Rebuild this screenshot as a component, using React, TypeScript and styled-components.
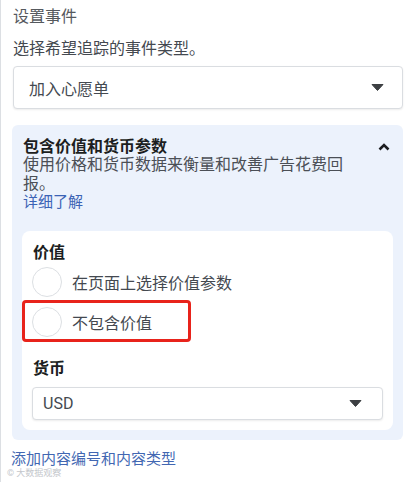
import React from "react";
import styled, { createGlobalStyle } from "styled-components";

const GlobalStyle = createGlobalStyle`
  html, body {
    margin: 0;
    padding: 0;
    background: #ffffff;
  }
  body {
    font-family: Roboto, "Noto Sans CJK SC", sans-serif;
    color: #444950;
  }
`;

const CaretDown: React.FC = () => (
  <svg width="13" height="7" viewBox="0 0 13 7">
    <path d="M1 0.5 H12 L6.5 6.5 Z" fill="#3d4043" stroke="#3d4043" strokeLinejoin="round" />
  </svg>
);

const ChevronUp: React.FC = () => (
  <svg width="12" height="8" viewBox="0 0 12 8">
    <polyline points="1.5,6.5 6,2 10.5,6.5" fill="none" stroke="#1c1e21" strokeWidth="2.6" />
  </svg>
);

interface SelectProps {
  value: string;
  size?: "lg" | "sm";
}

const Select: React.FC<SelectProps> = ({ value, size = "lg" }) => (
  <SelectBox $size={size}>
    <span>{value}</span>
    <CaretDown />
  </SelectBox>
);

const options = ["在页面上选择价值参数", "不包含价值"];

const App: React.FC = () => {
  return (
    <>
      <GlobalStyle />
      <Page>
        <SectionTitle>设置事件</SectionTitle>
        <Hint>选择希望追踪的事件类型。</Hint>
        <Select value="加入心愿单" />

        <Panel>
          <PanelHead>
            <PanelTitle>包含价值和货币参数</PanelTitle>
            <ChevronUp />
          </PanelHead>
          <Description>使用价格和货币数据来衡量和改善广告花费回报。</Description>
          <Link>详细了解</Link>

          <Card>
            <FieldLabel>价值</FieldLabel>
            {options.map((label, index) => (
              <RadioRow key={label}>
                <Radio />
                <RadioText>{label}</RadioText>
                {index === 1 && <Highlight />}
              </RadioRow>
            ))}
            <FieldLabel $gap>货币</FieldLabel>
            <Select value="USD" size="sm" />
          </Card>
        </Panel>

        <FooterLink>添加内容编号和内容类型</FooterLink>
        <Watermark>© 大数据观察</Watermark>
      </Page>
    </>
  );
};

export default App;

const Page = styled.div`
  box-sizing: border-box;
  height: 482px;
  padding: 8px 7px 0 11px;
  border-left: 1px solid #dcdfe3;
  display: flex;
  flex-direction: column;
  overflow: hidden;
`;

const SectionTitle = styled.div`
  font-size: 16px;
  line-height: 18px;
  color: #55595e;
  padding-left: 1px;
`;

const Hint = styled.div`
  margin-top: 14px;
  font-size: 16px;
  line-height: 18px;
  color: #444950;
  padding-left: 1px;
  margin-bottom: 8px;
`;

const SelectBox = styled.div<{ $size: "lg" | "sm" }>`
  box-sizing: border-box;
  display: flex;
  align-items: center;
  justify-content: space-between;
  height: ${(p) => (p.$size === "lg" ? "43px" : "33px")};
  margin-left: ${(p) => (p.$size === "lg" ? "1px" : "0")};
  padding: ${(p) => (p.$size === "lg" ? "0 18px 0 15px" : "0 20px 0 10px")};
  background: #ffffff;
  border: 1px solid #dadde1;
  border-radius: 4px;
  box-shadow: 0 1px 2px rgba(0, 0, 0, 0.08);
  font-size: 16px;
  color: #444950;
`;

const Panel = styled.div`
  margin-top: 16px;
  box-sizing: border-box;
  background: #ecf2fc;
  border-radius: 6px;
  padding: 14px 10px 10px 10px;
`;

const PanelHead = styled.div`
  display: flex;
  align-items: center;
  justify-content: space-between;
  padding: 0 3px 0 1px;
`;

const PanelTitle = styled.div`
  font-size: 16px;
  line-height: 16px;
  font-weight: 700;
  color: #1c1e21;
`;

const Description = styled.div`
  width: 330px;
  padding-left: 1px;
  margin-top: 1px;
  font-size: 16px;
  line-height: 18.5px;
  color: #4b4f56;
`;

const Link = styled.div`
  padding-left: 1px;
  font-size: 15px;
  line-height: 18.5px;
  color: #3b63b5;
`;

const Card = styled.div`
  margin-top: 19px;
  background: #ffffff;
  border-radius: 8px;
  padding: 13px 10px 10px 10px;
  display: flex;
  flex-direction: column;
`;

const FieldLabel = styled.div<{ $gap?: boolean }>`
  margin-top: ${(p) => (p.$gap ? "18px" : "0")};
  margin-bottom: ${(p) => (p.$gap ? "9px" : "0")};
  padding-left: 1px;
  font-size: 16px;
  line-height: 18px;
  font-weight: 700;
  color: #1c1e21;
`;

const RadioRow = styled.div`
  position: relative;
  display: flex;
  align-items: center;
  gap: 10px;
  height: 40px;
`;

const Radio = styled.span`
  box-sizing: border-box;
  width: 30px;
  height: 30px;
  border-radius: 50%;
  border: 1px solid #dcdfe3;
  background: #ffffff;
`;

const RadioText = styled.span`
  font-size: 16px;
  color: #444950;
`;

const Highlight = styled.span`
  position: absolute;
  left: -10px;
  top: -2px;
  width: 169px;
  height: 42px;
  box-sizing: border-box;
  border: 3px solid #e8231b;
  border-radius: 4px;
`;

const FooterLink = styled.div`
  margin-top: 10px;
  margin-left: -1px;
  font-size: 15px;
  line-height: 18px;
  color: #4267b2;
`;

const Watermark = styled.div`
  margin-left: -5px;
  font-size: 9px;
  line-height: 11px;
  color: #c4c7cc;
`;
